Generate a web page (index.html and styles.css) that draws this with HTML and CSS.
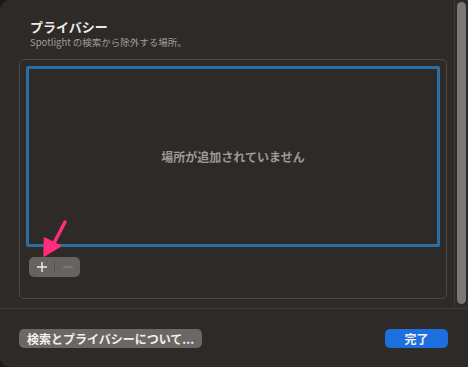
FILE: index.html
```html
<!DOCTYPE html>
<html lang="ja">
<head>
<meta charset="utf-8">
<link rel="stylesheet" href="styles.css">
</head>
<body>
<div class="window">
  <div class="main">
    <div class="content">
      <div class="title">プライバシー</div>
      <div class="subtitle">Spotlight の検索から除外する場所。</div>
      <div class="group">
        <div class="list">場所が追加されていません</div>
        <div class="pm">
          <span class="pm-btn">
            <svg width="12" height="12" viewBox="0 0 12 12"><path d="M6 1v10M1 6h10" stroke="#f0eeec" stroke-width="1.4" fill="none"/></svg>
          </span>
          <span class="pm-div"></span>
          <span class="pm-btn">
            <svg width="12" height="12" viewBox="0 0 12 12"><path d="M1 6h10" stroke="#8f8b88" stroke-width="1.2" fill="none"/></svg>
          </span>
        </div>
        <svg class="arrow" width="30" height="40" viewBox="0 0 30 40">
          <path d="M24 3 L12 26" stroke="#ff2d7a" stroke-width="3.5" stroke-linecap="round" fill="none"/>
          <path d="M3 37 L3.5 19 L19.5 27 Z" fill="#ff2d7a" stroke="#ff2d7a" stroke-width="1.5" stroke-linejoin="round"/>
        </svg>
      </div>
    </div>
    <div class="vline"></div>
    <div class="track"><div class="thumb"></div></div>
  </div>
  <div class="hr"></div>
  <div class="footer">
    <button class="btn grey">検索とプライバシーについて...</button>
    <button class="btn blue">完了</button>
  </div>
</div>
</body>
</html>
```
FILE: styles.css
```css
html, body {
  margin: 0;
  padding: 0;
  background: #1c1a18;
}
body {
  width: 468px;
  height: 367px;
  overflow: hidden;
  font-family: "Noto Sans CJK JP", "Noto Sans", sans-serif;
}
.window {
  width: 468px;
  height: 367px;
  background: #2e2a27;
  border-radius: 10px 0 0 10px;
  display: flex;
  flex-direction: column;
  overflow: hidden;
}
.main {
  display: flex;
  height: 308px;
}
.content {
  flex: 1;
  padding: 19px 7px 0 19px;
  position: relative;
}
.title {
  margin-left: 11px;
  font-size: 13px;
  font-weight: bold;
  color: #ebe9e7;
  line-height: 16px;
}
.subtitle {
  margin-left: 11px;
  font-size: 9.5px;
  color: #a29e9b;
  line-height: 14px;
}
.group {
  margin-top: 10px;
  height: 226px;
  border: 1px solid #4c4845;
  border-radius: 5px;
  padding: 6px;
  position: relative;
}
.list {
  height: 175px;
  border: 3px solid #2b6ea3;
  border-radius: 2px;
  display: flex;
  align-items: center;
  justify-content: center;
  font-size: 12px;
  font-weight: bold;
  color: #9d9996;
}
.pm {
  margin-top: 10px;
  margin-left: 3px;
  width: 51px;
  height: 20px;
  background: #676360;
  border-radius: 5px;
  display: flex;
  align-items: center;
}
.pm-btn {
  flex: 1;
  display: flex;
  align-items: center;
  justify-content: center;
}
.pm-div {
  width: 1px;
  height: 12px;
  background: #55514e;
}
.arrow {
  position: absolute;
  left: 21px;
  top: 159px;
}
.vline {
  width: 1px;
  background: #3d3936;
}
.track {
  width: 13px;
  padding: 2px 2px 4px 2px;
  box-sizing: border-box;
  display: flex;
}
.thumb {
  flex: 1;
  background: #7b7774;
  border-radius: 5px;
}
.hr {
  height: 1px;
  background: #3d3936;
}
.footer {
  flex: 1;
  display: flex;
  justify-content: space-between;
  align-items: flex-start;
  padding: 20px 20px 0 19px;
}
.btn {
  height: 19px;
  border: none;
  border-radius: 5px;
  font-family: "Noto Sans CJK JP", "Noto Sans", sans-serif;
  font-size: 12px;
  font-weight: bold;
  color: #f2f0ee;
  padding: 0;
  line-height: 19px;
}
.btn.grey {
  width: 183px;
  background: #6b6764;
}
.btn.blue {
  width: 63px;
  background: #1d6fe0;
}
```
